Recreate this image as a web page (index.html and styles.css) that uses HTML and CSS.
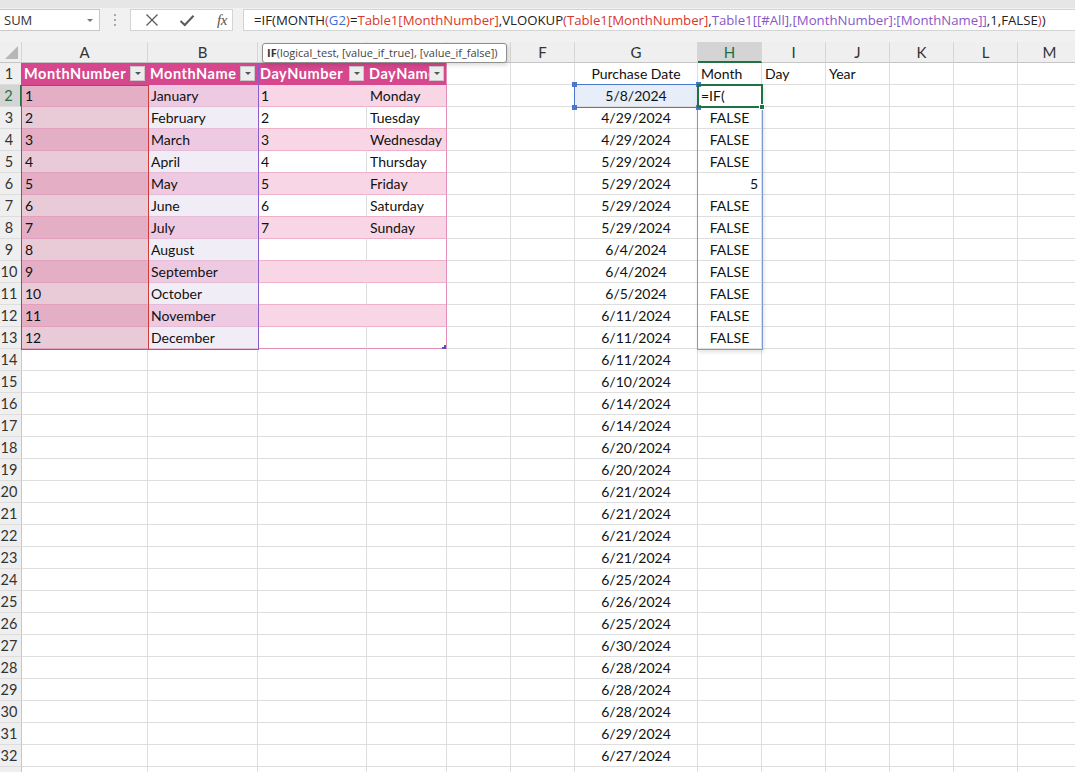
FILE: index.html
```html
<!DOCTYPE html>
<html>
<head>
<meta charset="utf-8">
<link rel="stylesheet" href="styles.css">
</head>
<body>
<div class="app">
  <div class="topbar">
    <div class="fbar">
      <div class="namebox"><span>SUM</span><i class="nb-arrow"></i></div>
      <div class="grip"><i></i><i></i><i></i></div>
      <div class="btnbox">
        <svg class="ic" width="14" height="14" viewBox="0 0 14 14"><path d="M1.5 1.5L12.5 12.5M12.5 1.5L1.5 12.5" stroke="#5a5a5a" stroke-width="1.3" fill="none"/></svg>
        <svg class="ic" width="16" height="13" viewBox="0 0 16 13"><path d="M1.5 7L5.8 11L14.5 1.8" stroke="#5a5a5a" stroke-width="2" fill="none"/></svg>
        <span class="fx">fx</span>
      </div>
      <div class="formula">=IF(MONTH<span class="red">(</span><span class="blue">G2</span><span class="red">)</span>=<span class="red">Table1[MonthNumber]</span>,VLOOKUP<span class="red">(</span><span class="red">Table1[MonthNumber]</span>,<span class="purple">Table1[[#All],[MonthNumber]:[MonthName]]</span>,1,FALSE<span class="red">)</span>)</div>
    </div>
  </div>

  <div class="sheet">
    <div class="r hdr">
      <div class="corner"><i></i></div><div>A</div><div>B</div><div>C</div><div>D</div><div>E</div><div>F</div><div>G</div><div class="on">H</div><div>I</div><div>J</div><div>K</div><div>L</div><div>M</div>
    </div>

    <div class="r">
      <div class="rh">1</div>
      <div class="th a"><span>MonthNumber</span><b class="dd"></b></div>
      <div class="th b"><span>MonthName</span><b class="dd"></b></div>
      <div class="th c"><span>DayNumber</span><b class="dd"></b></div>
      <div class="th d"><span>DayName</span><b class="dd"></b></div>
      <div></div><div></div><div class="ctr">Purchase Date</div><div>Month</div><div>Day</div><div>Year</div><div></div><div></div><div></div>
    </div>

    <div class="r band"><div class="rh sel">2</div><div class="a">1</div><div class="b">January</div><div class="c">1</div><div class="d">Monday</div><div></div><div></div><div class="ctr g2">5/8/2024</div><div>=IF(</div><div></div><div></div><div></div><div></div><div></div></div>
    <div class="r plain"><div class="rh">3</div><div class="a">2</div><div class="b">February</div><div class="c">2</div><div class="d">Tuesday</div><div></div><div></div><div class="ctr">4/29/2024</div><div class="ctr">FALSE</div><div></div><div></div><div></div><div></div><div></div></div>
    <div class="r band"><div class="rh">4</div><div class="a">3</div><div class="b">March</div><div class="c">3</div><div class="d">Wednesday</div><div></div><div></div><div class="ctr">4/29/2024</div><div class="ctr">FALSE</div><div></div><div></div><div></div><div></div><div></div></div>
    <div class="r plain"><div class="rh">5</div><div class="a">4</div><div class="b">April</div><div class="c">4</div><div class="d">Thursday</div><div></div><div></div><div class="ctr">5/29/2024</div><div class="ctr">FALSE</div><div></div><div></div><div></div><div></div><div></div></div>
    <div class="r band"><div class="rh">6</div><div class="a">5</div><div class="b">May</div><div class="c">5</div><div class="d">Friday</div><div></div><div></div><div class="ctr">5/29/2024</div><div class="rt">5</div><div></div><div></div><div></div><div></div><div></div></div>
    <div class="r plain"><div class="rh">7</div><div class="a">6</div><div class="b">June</div><div class="c">6</div><div class="d">Saturday</div><div></div><div></div><div class="ctr">5/29/2024</div><div class="ctr">FALSE</div><div></div><div></div><div></div><div></div><div></div></div>
    <div class="r band"><div class="rh">8</div><div class="a">7</div><div class="b">July</div><div class="c">7</div><div class="d">Sunday</div><div></div><div></div><div class="ctr">5/29/2024</div><div class="ctr">FALSE</div><div></div><div></div><div></div><div></div><div></div></div>
    <div class="r plain"><div class="rh">9</div><div class="a">8</div><div class="b">August</div><div class="c"></div><div class="d"></div><div></div><div></div><div class="ctr">6/4/2024</div><div class="ctr">FALSE</div><div></div><div></div><div></div><div></div><div></div></div>
    <div class="r band"><div class="rh">10</div><div class="a">9</div><div class="b">September</div><div class="c"></div><div class="d"></div><div></div><div></div><div class="ctr">6/4/2024</div><div class="ctr">FALSE</div><div></div><div></div><div></div><div></div><div></div></div>
    <div class="r plain"><div class="rh">11</div><div class="a">10</div><div class="b">October</div><div class="c"></div><div class="d"></div><div></div><div></div><div class="ctr">6/5/2024</div><div class="ctr">FALSE</div><div></div><div></div><div></div><div></div><div></div></div>
    <div class="r band"><div class="rh">12</div><div class="a">11</div><div class="b">November</div><div class="c"></div><div class="d"></div><div></div><div></div><div class="ctr">6/11/2024</div><div class="ctr">FALSE</div><div></div><div></div><div></div><div></div><div></div></div>
    <div class="r plain last"><div class="rh">13</div><div class="a">12</div><div class="b">December</div><div class="c"></div><div class="d"></div><div></div><div></div><div class="ctr">6/11/2024</div><div class="ctr">FALSE</div><div></div><div></div><div></div><div></div><div></div></div>

    <div class="r"><div class="rh">14</div><div></div><div></div><div></div><div></div><div></div><div></div><div class="ctr">6/11/2024</div><div></div><div></div><div></div><div></div><div></div><div></div></div>
    <div class="r"><div class="rh">15</div><div></div><div></div><div></div><div></div><div></div><div></div><div class="ctr">6/10/2024</div><div></div><div></div><div></div><div></div><div></div><div></div></div>
    <div class="r"><div class="rh">16</div><div></div><div></div><div></div><div></div><div></div><div></div><div class="ctr">6/14/2024</div><div></div><div></div><div></div><div></div><div></div><div></div></div>
    <div class="r"><div class="rh">17</div><div></div><div></div><div></div><div></div><div></div><div></div><div class="ctr">6/14/2024</div><div></div><div></div><div></div><div></div><div></div><div></div></div>
    <div class="r"><div class="rh">18</div><div></div><div></div><div></div><div></div><div></div><div></div><div class="ctr">6/20/2024</div><div></div><div></div><div></div><div></div><div></div><div></div></div>
    <div class="r"><div class="rh">19</div><div></div><div></div><div></div><div></div><div></div><div></div><div class="ctr">6/20/2024</div><div></div><div></div><div></div><div></div><div></div><div></div></div>
    <div class="r"><div class="rh">20</div><div></div><div></div><div></div><div></div><div></div><div></div><div class="ctr">6/21/2024</div><div></div><div></div><div></div><div></div><div></div><div></div></div>
    <div class="r"><div class="rh">21</div><div></div><div></div><div></div><div></div><div></div><div></div><div class="ctr">6/21/2024</div><div></div><div></div><div></div><div></div><div></div><div></div></div>
    <div class="r"><div class="rh">22</div><div></div><div></div><div></div><div></div><div></div><div></div><div class="ctr">6/21/2024</div><div></div><div></div><div></div><div></div><div></div><div></div></div>
    <div class="r"><div class="rh">23</div><div></div><div></div><div></div><div></div><div></div><div></div><div class="ctr">6/21/2024</div><div></div><div></div><div></div><div></div><div></div><div></div></div>
    <div class="r"><div class="rh">24</div><div></div><div></div><div></div><div></div><div></div><div></div><div class="ctr">6/25/2024</div><div></div><div></div><div></div><div></div><div></div><div></div></div>
    <div class="r"><div class="rh">25</div><div></div><div></div><div></div><div></div><div></div><div></div><div class="ctr">6/26/2024</div><div></div><div></div><div></div><div></div><div></div><div></div></div>
    <div class="r"><div class="rh">26</div><div></div><div></div><div></div><div></div><div></div><div></div><div class="ctr">6/25/2024</div><div></div><div></div><div></div><div></div><div></div><div></div></div>
    <div class="r"><div class="rh">27</div><div></div><div></div><div></div><div></div><div></div><div></div><div class="ctr">6/30/2024</div><div></div><div></div><div></div><div></div><div></div><div></div></div>
    <div class="r"><div class="rh">28</div><div></div><div></div><div></div><div></div><div></div><div></div><div class="ctr">6/28/2024</div><div></div><div></div><div></div><div></div><div></div><div></div></div>
    <div class="r"><div class="rh">29</div><div></div><div></div><div></div><div></div><div></div><div></div><div class="ctr">6/28/2024</div><div></div><div></div><div></div><div></div><div></div><div></div></div>
    <div class="r"><div class="rh">30</div><div></div><div></div><div></div><div></div><div></div><div></div><div class="ctr">6/28/2024</div><div></div><div></div><div></div><div></div><div></div><div></div></div>
    <div class="r"><div class="rh">31</div><div></div><div></div><div></div><div></div><div></div><div></div><div class="ctr">6/29/2024</div><div></div><div></div><div></div><div></div><div></div><div></div></div>
    <div class="r"><div class="rh">32</div><div></div><div></div><div></div><div></div><div></div><div></div><div class="ctr">6/27/2024</div><div></div><div></div><div></div><div></div><div></div><div></div></div>
    <div class="r"><div class="rh"></div><div></div><div></div><div></div><div></div><div></div><div></div><div></div><div></div><div></div><div></div><div></div><div></div><div></div></div>

    <div class="ov ref-purple"></div>
    <div class="ov ref-red"></div>
    <div class="ov ref-hblue"></div>
    <div class="ov sel-g2"><i class="h tl"></i><i class="h tr"></i><i class="h bl"></i><i class="h br"></i></div>
    <div class="ov active"><i class="fill"></i></div>
    <div class="ov tresize"></div>
    <div class="ov tip"><b>IF</b>(logical_test, [value_if_true], [value_if_false])</div>
  </div>
</div>
</body>
</html>
```
FILE: styles.css
```css
* { box-sizing: border-box; }
html, body { margin: 0; padding: 0; }
body {
  width: 1075px;
  height: 772px;
  overflow: hidden;
  background: #ffffff;
  font-family: Lato, "Open Sans", sans-serif;
}
.app { width: 1075px; height: 772px; overflow: hidden; display: flex; flex-direction: column; }

/* ---------- formula bar ---------- */
.topbar {
  height: 42px;
  flex: none;
  background: #f1f1f1;
  border-top: 8px solid #e6e6e6;
  padding-top: 1px;
}
.fbar { display: flex; align-items: stretch; height: 22px; }
.namebox {
  width: 100px;
  background: #fff;
  border: 1px solid #c9c9c9;
  border-left: none;
  display: flex;
  align-items: center;
  justify-content: space-between;
  padding: 0 6px 0 4px;
  font-family: "Open Sans", sans-serif;
  font-size: 13px;
  color: #333;
}
.nb-arrow {
  width: 0; height: 0;
  border-left: 3px solid transparent;
  border-right: 3px solid transparent;
  border-top: 3px solid #777;
}
.grip {
  width: 30px;
  display: flex;
  flex-direction: column;
  align-items: center;
  justify-content: center;
  gap: 3px;
}
.grip i { width: 2px; height: 2px; background: #a8a8a8; display: block; }
.btnbox {
  width: 103px;
  background: #fff;
  border: 1px solid #d4d4d4;
  display: flex;
  align-items: center;
  padding-left: 14px;
  gap: 20px;
}
.ic { display: block; }
.fx {
  font-family: "Liberation Serif", serif;
  font-style: italic;
  font-size: 15px;
  color: #555;
  margin-left: 2px;
  letter-spacing: -0.5px;
}
.formula {
  margin-left: 10px;
  flex: 1;
  background: #fff;
  border: 1px solid #d4d4d4;
  border-right: none;
  font-family: "Open Sans", sans-serif;
  font-size: 13.2px;
  line-height: 20px;
  padding-left: 10px;
  color: #222;
  white-space: nowrap;
  overflow: hidden;
}
.red { color: #d8382e; }
.blue { color: #3c6fd6; }
.purple { color: #8757c8; }

/* ---------- sheet ---------- */
.sheet { position: relative; flex: 1; overflow: hidden; background: #fff; }
.r {
  display: grid;
  grid-template-columns: 22px 126px 110px 109px 80px 64px 64px 123px 64px 64px 64px 64px 64px 64px;
  width: 1082px;
  height: 22px;
}
.r > div {
  height: 22px;
  border-right: 1px solid #dedede;
  border-bottom: 1px solid #dedede;
  padding: 0 3px;
  font-size: 14px;
  line-height: 22px;
  color: #111;
  white-space: nowrap;
  overflow: hidden;
}
.r.hdr { height: 21px; }
.r.hdr > div {
  height: 21px;
  line-height: 21px;
  background: #efefef;
  border-right: 1px solid #d6d6d6;
  border-bottom: 1px solid #c4c4c4;
  text-align: center;
  font-size: 15px;
  color: #333;
}
.r.hdr > div.on {
  background: #d4d4d4;
  color: #1f6e43;
  border-bottom: 2px solid #1f7244;
}
.r.hdr > .corner { position: relative; }
.corner i {
  position: absolute;
  right: 3px; bottom: 3px;
  width: 0; height: 0;
  border-left: 13px solid transparent;
  border-bottom: 13px solid #b7b7b7;
}
.r > div.rh {
  background: #efefef;
  border-right: 1px solid #c8c8c8;
  border-bottom: 1px solid #dddddd;
  padding: 0 3px 0 0;
  text-align: center;
  font-size: 14.5px;
  color: #333;
}
.r > div.rh.sel {
  background: #d4d4d4;
  color: #1f6e43;
  border-right: 2px solid #1f7244;
}
.r > div.ctr { text-align: center; }
.r > div.rt { text-align: right; }
.r > div.g2 { background: #e7eef9; }

/* table header */
.r > div.th {
  background: #d6478e;
  border-right-color: #d6478e;
  border-bottom-color: #d6478e;
  color: #fff;
  font-weight: 700;
  font-size: 14.5px;
  letter-spacing: 0.55px;
  display: flex;
  align-items: center;
  padding: 0 2px 0 2px;
}
.th span { flex: 1; overflow: hidden; white-space: nowrap; min-width: 0; }
.r > div.th.d { border-right: 1px solid #e48db6; }
.dd {
  flex: none;
  width: 15px;
  height: 15px;
  background: #ededed;
  border: 1px solid #c8c8c8;
  display: flex;
  align-items: center;
  justify-content: center;
}
.dd::after {
  content: "";
  width: 0; height: 0;
  border-left: 3px solid transparent;
  border-right: 3px solid transparent;
  border-top: 3px solid #555;
}

/* table body bands */
.band > div.a { background: #e4afc5; border-bottom-color: #e29fbb; border-right-color: #e4afc5; }
.plain > div.a { background: #e9cbd8; border-bottom-color: #e29fbb; border-right-color: #e9cbd8; }
.band > div.b { background: #eecae2; border-bottom-color: #e6bcd7; border-right-color: #eecae2; }
.plain > div.b { background: #f1edf7; border-bottom-color: #e6bcd7; border-right-color: #f1edf7; }
.band > div.c { background: #f8d6e6; border-bottom-color: #efb0cc; border-right-color: #f8d6e6; }
.plain > div.c { background: #ffffff; border-bottom-color: #efb0cc; }
.band > div.d { background: #f8d6e6; border-bottom-color: #efb0cc; border-right-color: #e48db6; }
.plain > div.d { background: #ffffff; border-bottom-color: #efb0cc; border-right-color: #e48db6; }
.last > div.c, .last > div.d { border-bottom-color: #e48db6; }

/* ---------- overlays ---------- */
.ov { position: absolute; pointer-events: none; }
.ref-purple { left: 21px; top: 21px; width: 238px; height: 287px; border: 1.5px solid #8b5dcc; }
.ref-red { left: 21px; top: 43px; width: 128px; height: 264px; border: 1.5px solid #cf3a3a; border-bottom: none; }
.ref-hblue {
  left: 697px; top: 43px; width: 66px; height: 265px;
  border: 1.5px solid #7c9bd6;
  box-shadow: 1px 2px 4px rgba(0,0,0,0.12);
}
.sel-g2 { left: 574px; top: 42px; width: 125px; height: 24px; border: 1.5px solid #4a78cc; }
.sel-g2 .h { position: absolute; width: 5px; height: 5px; background: #4a78cc; }
.sel-g2 .tl { left: -3px; top: -3px; }
.sel-g2 .tr { right: -3px; top: -3px; }
.sel-g2 .bl { left: -3px; bottom: -3px; }
.sel-g2 .br { right: -3px; bottom: -3px; }
.active {
  left: 697px; top: 42px; width: 66px; height: 24px;
  border: 2px solid #1f7244;
  background: transparent;
}
.active .fill {
  position: absolute; right: -4px; bottom: -4px;
  width: 6px; height: 6px; background: #1f7244; border: 1px solid #fff;
}
.tresize {
  left: 442px; top: 303px; width: 4px; height: 4px;
  border-right: 2px solid #4a55c8; border-bottom: 2px solid #4a55c8;
}
.tip {
  left: 262px; top: 1px; width: 245px; height: 20px;
  background: #fff;
  border: 1px solid #8f8f8f;
  border-radius: 3px;
  box-shadow: 1px 2px 4px rgba(0,0,0,0.15);
  font-family: "Open Sans", sans-serif;
  font-size: 11px;
  line-height: 18px;
  color: #444;
  padding-left: 4px;
  white-space: nowrap;
  overflow: hidden;
}
.tip b { color: #333; }
```
